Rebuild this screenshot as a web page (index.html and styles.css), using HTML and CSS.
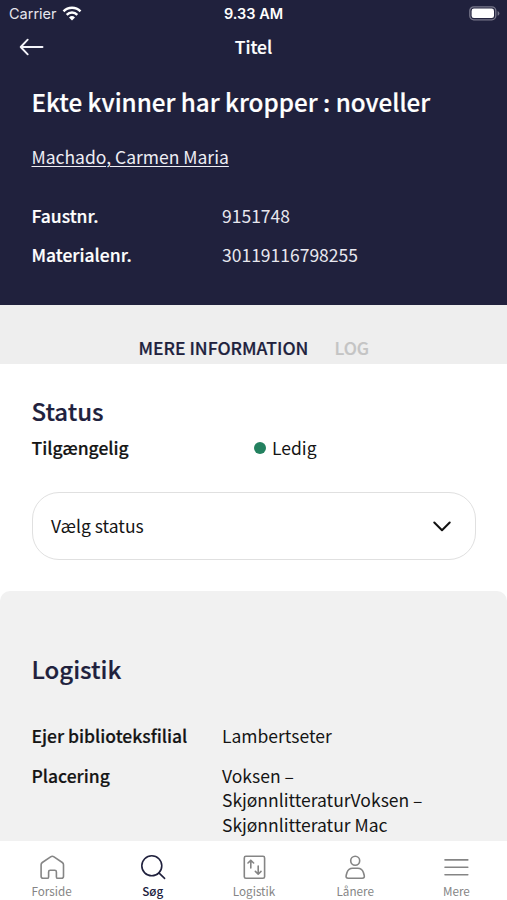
FILE: index.html
```html
<!DOCTYPE html>
<html lang="da">
<head>
<meta charset="utf-8">
<title>Titel</title>
<link rel="stylesheet" href="styles.css">
</head>
<body>
<div class="screen">
  <header class="header">
    <div class="statusbar">
      <div class="carrier"><span>Carrier</span>
        <svg width="20" height="15" viewBox="0 0 20 15" fill="none" stroke="#fff" stroke-width="2.5"><path d="M1.5 5.4a12 12 0 0 1 17 0"/><path d="M4.7 8.8a7.5 7.5 0 0 1 10.6 0"/><path d="M10 14.4 7 11.4a4.3 4.3 0 0 1 6 0z" fill="#fff" stroke="none"/></svg>
      </div>
      <div class="clock">9.33 AM</div>
      <svg class="battery" width="31" height="15" viewBox="0 0 31 15"><rect x=".8" y=".8" width="26" height="13" rx="4" fill="#24243f" stroke="#77778a" stroke-width="1.3"/><rect x="2.6" y="2.6" width="22.4" height="9.4" rx="2.3" fill="#fff"/><path d="M28.6 5v4.8q1.8-.8 1.8-2.4T28.6 5z" fill="#77778a"/></svg>
    </div>
    <div class="navbar">
      <svg width="26" height="20" viewBox="0 0 26 20" fill="none" stroke="#f4f4fa" stroke-width="1.9" stroke-linecap="round" stroke-linejoin="round"><path d="M23.5 10H1.7M8.7 2.7 1.7 10l7 7.3"/></svg>
      <div class="navtitle semi">Titel</div>
    </div>
    <h1 class="title semi">Ekte kvinner har kropper : noveller</h1>
    <a class="author">Machado, Carmen Maria</a>
    <dl class="facts">
      <dt class="semi">Faustnr.</dt><dd>9151748</dd>
      <dt class="semi">Materialenr.</dt><dd>30119116798255</dd>
    </dl>
  </header>
  <nav class="tabs"><span class="tab-active semi">MERE INFORMATION</span><span class="tab semi">LOG</span></nav>
  <section class="status">
    <h2 class="semi">Status</h2>
    <div class="availability"><span class="semi">Tilgængelig</span><span class="free"><i class="dot"></i>Ledig</span></div>
    <div class="select"><span>Vælg status</span>
      <svg width="18" height="11" viewBox="0 0 18 11" fill="none" stroke="#111" stroke-width="2" stroke-linecap="round" stroke-linejoin="round"><path d="m1.3 1.5 7.7 7.8 7.7-7.8"/></svg>
    </div>
  </section>
  <section class="logistics">
    <h2 class="semi">Logistik</h2>
    <dl class="facts">
      <dt class="semi">Ejer biblioteksfilial</dt><dd>Lambertseter</dd>
      <dt class="semi">Placering</dt><dd>Voksen –<br>SkjønnlitteraturVoksen –<br>Skjønnlitteratur Mac</dd>
    </dl>
  </section>
  <nav class="bottom">
    <div class="item"><svg width="26" height="26" viewBox="0 0 26 26"><path d="M3.3 8.5 11.6 2.8q1.7-1.1 3.4 0l8.3 5.7q1.2.9 1.2 2.3v11.5q0 2-2 2h-3.7q-1.4 0-1.4-1.4v-5q0-1.6-1.6-1.6h-4.6q-1.6 0-1.6 1.6v5q0 1.4-1.4 1.4H4.1q-2 0-2-2V10.8q0-1.4 1.2-2.3z"/></svg><span>Forside</span></div>
    <div class="item selected"><svg width="26" height="26" viewBox="0 0 26 26"><circle cx="11.8" cy="11.8" r="10"/><path d="m18.9 18.9 5.7 5.5"/></svg><span>Søg</span></div>
    <div class="item"><svg width="26" height="26" viewBox="0 0 26 26"><rect x="3.3" y="2.3" width="20.3" height="22" rx="1.6"/><path d="M9.8 14V6.2M7 9l2.8-2.8L12.6 9M17.2 12v8.2M14.4 17.4l2.8 2.8 2.8-2.8"/></svg><span>Logistik</span></div>
    <div class="item"><svg width="26" height="26" viewBox="0 0 26 26"><circle cx="13.2" cy="6.8" r="4.5"/><path d="M10.6 14.3h5.2q4.2 0 5.6 4.2l.8 2.8q.7 3-2 3H6.2q-2.7 0-2-3l.8-2.8q1.4-4.2 5.6-4.2z"/></svg><span>Lånere</span></div>
    <div class="item"><svg width="26" height="26" viewBox="0 0 26 26"><path d="M2 5.9h22.8M2 13.3h22.8M2 20.7h22.8"/></svg><span>Mere</span></div>
  </nav>
</div>
</body>
</html>
```
FILE: styles.css
```css
* { box-sizing: border-box; margin: 0; padding: 0; }
body { font: 17.5px/24.5px "Noto Sans CJK SC", sans-serif; color: #151515; background: #fff; }
.screen { width: 507px; height: 900px; display: flex; flex-direction: column; overflow: hidden; }
.semi { font-weight: 500; -webkit-text-stroke: .2px currentColor; }
.header { height: 305px; flex: none; background: #20213d; color: #fff; }
.statusbar { height: 27px; display: grid; grid-template-columns: 1fr auto 1fr; align-items: center; padding: 0 7px 0 9px; font: 14.5px/27px Inter, sans-serif; }
.carrier { display: flex; align-items: center; gap: 5px; color: #e6e6ed; }
.clock { font-weight: 600; margin-right: 2px; }
.battery { justify-self: end; }
.navbar { height: 40px; display: grid; grid-template-columns: 1fr auto 1fr; align-items: center; padding: 0 19px; }
.title { margin: 19px 31.5px 0; font-size: 24.2px; line-height: 32px; white-space: nowrap; }
.author { display: block; width: max-content; margin: 27px 31.5px 0; text-decoration: underline; text-underline-offset: 2px; text-decoration-thickness: 1px; color: #eeeef4; }
.facts { display: grid; grid-template-columns: 190.5px 1fr; row-gap: 15px; padding: 0 31.5px; white-space: nowrap; }
.header .facts { margin-top: 34px; }
.header dd { color: #e7e7ee; }
.tabs { height: 59px; flex: none; background: #eee; display: flex; gap: 26px; padding: 31px 0 0 138.5px; }
.tab-active { color: #20213d; }
.tab { color: #c4c4c4; }
.status { height: 227px; flex: none; padding: 31px 31.5px 0; }
h2 { color: #20213d; font-size: 24px; line-height: 32px; }
.availability { display: grid; grid-template-columns: 222.5px 1fr; margin-top: 9px; }
.free { display: flex; align-items: center; gap: 6px; }
.dot { width: 12px; height: 12px; border-radius: 50%; background: #23815f; }
.select { margin-top: 31.5px; width: 444.4px; height: 68px; border: 1px solid #e0e0e0; border-radius: 27px; display: flex; align-items: center; justify-content: space-between; padding: 0 24px 0 18.5px; }
.logistics { height: 250px; flex: none; background: #f1f1f1; border-radius: 10px 10px 0 0; padding-top: 62px; overflow: hidden; }
.logistics h2 { margin: 0 31.5px; }
.logistics .facts { margin-top: 39px; }
.bottom { flex: 1; background: #fff; display: grid; grid-template-columns: repeat(5, 1fr); padding: 13px 0 0 1px; }
.item { display: flex; flex-direction: column; align-items: center; color: #858585; font-size: 11.7px; line-height: 17px; gap: 2px; }
.item svg { flex: none; fill: none; stroke: currentColor; stroke-width: 1.6; stroke-linecap: round; stroke-linejoin: round; }
.selected { color: #20213d; font-weight: 500; }
```
